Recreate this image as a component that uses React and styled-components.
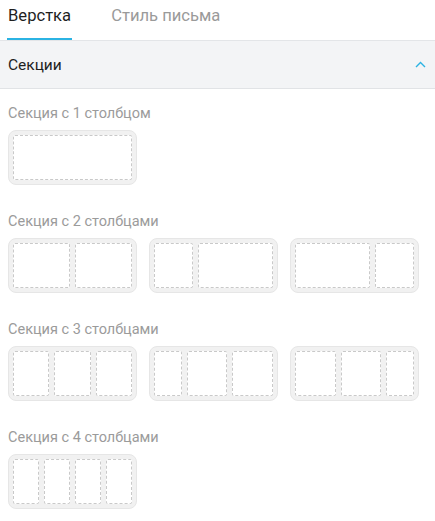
import React from "react";
import styled, { createGlobalStyle } from "styled-components";

const GlobalStyle = createGlobalStyle`
    body {
        margin: 0;
        background: #fff;
        font-family: Roboto, "Noto Sans", sans-serif;
    }
`;

const Page = styled.div`
    width: 435px;
`;

const TabBar = styled.div`
    display: flex;
    gap: 38px;
    height: 41px;
    padding: 0 7px;
    border-bottom: 1px solid #e3e5e8;
    box-sizing: border-box;
`;

const Tab = styled.div`
    padding: 6px 1px 0;
    font-size: 16.6px;
    line-height: 20px;
    color: ${(p) => (p.$active ? "#1f1f1f" : "#9a9a9a")};
    border-bottom: 2px solid ${(p) => (p.$active ? "#2bb3e3" : "transparent")};
    height: 40px;
    box-sizing: border-box;
`;

const PanelHeader = styled.div`
    display: flex;
    align-items: center;
    justify-content: space-between;
    height: 48px;
    padding: 0 9px 0 8px;
    background: #f3f4f6;
    border-bottom: 1px solid #e1e3e6;
    box-sizing: border-box;
    font-size: 15.5px;
    color: #1f1f1f;
`;

const Body = styled.div`
    padding: 14px 8px 0;
    display: flex;
    flex-direction: column;
    gap: 26px;
`;

const Section = styled.div`
    display: flex;
    flex-direction: column;
    gap: 5px;
`;

const Label = styled.div`
    font-size: 14.5px;
    line-height: 22px;
    color: #9b9b9b;
`;

const Row = styled.div`
    display: flex;
    gap: 12px;
`;

const Card = styled.div`
    display: flex;
    gap: 5px;
    width: 129px;
    height: 55px;
    padding: 4px;
    box-sizing: border-box;
    background: #f1f1f1;
    border: 1px solid #e6e6e6;
    border-radius: 8px;
`;

const Col = styled.div`
    flex: ${(p) => p.$grow} 1 0;
    background: #fff;
    border: 1px dashed #c9c9c9;
    border-radius: 2px;
`;

const sections = [
    { title: "Секция с 1 столбцом", layouts: [[1]] },
    { title: "Секция с 2 столбцами", layouts: [[1, 1], [1, 2], [2, 1]] },
    { title: "Секция с 3 столбцами", layouts: [[1, 1, 1], [2, 3, 3], [3, 3, 2]] },
    { title: "Секция с 4 столбцами", layouts: [[1, 1, 1, 1]] },
];

function App() {
    return (
        <Page>
            <GlobalStyle />
            <TabBar>
                <Tab $active>Верстка</Tab>
                <Tab>Стиль письма</Tab>
            </TabBar>
            <PanelHeader>
                Секции
                <svg width="11" height="7" viewBox="0 0 11 7">
                    <polyline points="1,6 5.5,1.5 10,6" fill="none" stroke="#2bb3e3" strokeWidth="1.4" />
                </svg>
            </PanelHeader>
            <Body>
                {sections.map((s) => (
                    <Section key={s.title}>
                        <Label>{s.title}</Label>
                        <Row>
                            {s.layouts.map((cols, i) => (
                                <Card key={i}>
                                    {cols.map((g, j) => (
                                        <Col key={j} $grow={g} />
                                    ))}
                                </Card>
                            ))}
                        </Row>
                    </Section>
                ))}
            </Body>
        </Page>
    );
}

export default App;
